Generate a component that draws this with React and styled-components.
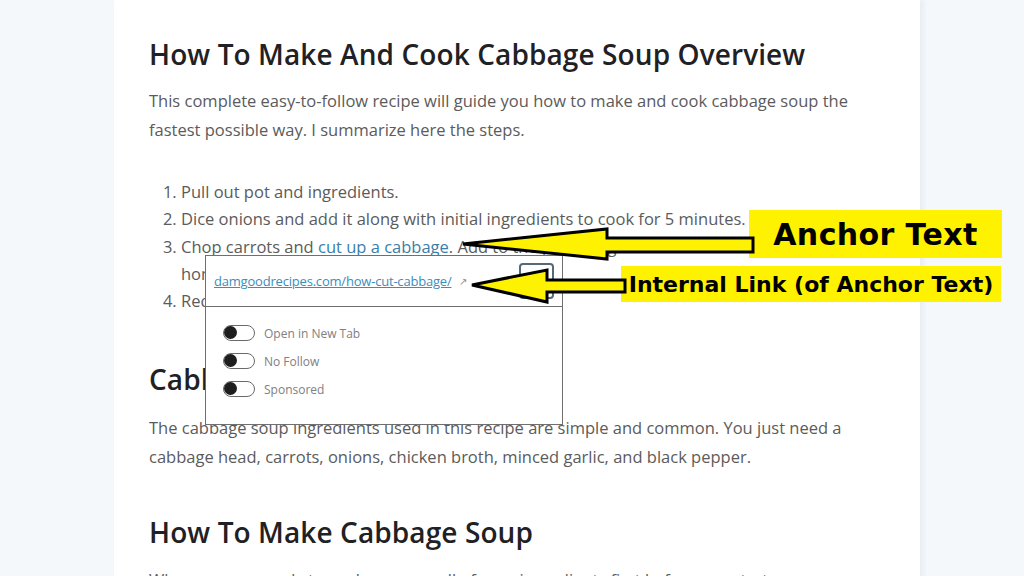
import styled, { createGlobalStyle } from 'styled-components';

const GlobalStyle = createGlobalStyle`
  html, body {
    margin: 0;
    padding: 0;
    background: #f4f8fb;
  }
  body {
    font-family: 'Open Sans', 'Liberation Sans', sans-serif;
  }
`;

const Page = styled.div`
  position: relative;
  width: 1024px;
  height: 576px;
  overflow: hidden;
  display: grid;
  grid-template-columns: 114px 806px 1fr;
  background: #f4f8fb;
`;

const Gutter = styled.div`
  background: #f4f8fb;
`;

const Column = styled.main`
  position: relative;
  background: #fff;
  padding: 37px 0 0 35px;
  box-shadow: 3px 0 5px rgba(200, 215, 225, 0.35);
`;

const Heading = styled.h2`
  margin: ${(p) => p.$top || 0}px 0 ${(p) => p.$bottom || 16}px;
  font-size: 28px;
  line-height: 34px;
  font-weight: 600;
  color: #1f2124;
  letter-spacing: 0.1px;
`;

const Text = styled.p`
  margin: ${(p) => p.$top || 0}px 0 0;
  width: 730px;
  font-size: 16.5px;
  line-height: 29px;
  color: #5b5b5b;
`;

const Steps = styled.ol`
  margin: 34px 0 0;
  padding-left: 32px;
  width: 690px;
  font-size: 16.5px;
  line-height: 27.3px;
  color: #5b5b5b;
`;

const Link = styled.a`
  color: #3a7ea8;
  text-decoration: underline;
  text-underline-offset: 2px;
`;

/* block editor link popover */
const Popover = styled.div`
  position: absolute;
  left: 91px;
  top: 255px;
  width: 358px;
  height: 170px;
  box-sizing: border-box;
  background: #fff;
  border: 1px solid #6f6f6f;
`;

const UrlRow = styled.div`
  display: flex;
  align-items: center;
  height: 50px;
  padding: 0 8px;
  border-bottom: 1px solid #6f6f6f;
`;

const Url = styled.a`
  font-size: 13px;
  color: #3b8dbb;
  text-decoration: underline;
  letter-spacing: -0.2px;
`;

const External = styled.span`
  margin-left: 8px;
  font-size: 10px;
  color: #8a8a8a;
`;

const EditButton = styled.div`
  margin-left: auto;
  width: 35px;
  height: 36px;
  box-sizing: border-box;
  border: 2px solid #54697a;
  border-radius: 4px;
`;

const Settings = styled.div`
  display: flex;
  flex-direction: column;
  padding: 12px 0 0 17px;
`;

const SettingRow = styled.label`
  display: flex;
  align-items: center;
  height: 28px;
`;

const Track = styled.span`
  position: relative;
  width: 32px;
  height: 16px;
  box-sizing: border-box;
  border: 1.5px solid #6a6a6a;
  border-radius: 8px;
  &::after {
    content: '';
    position: absolute;
    left: -0.5px;
    top: 0px;
    width: 13px;
    height: 13px;
    border-radius: 50%;
    background: #1e1e1e;
  }
`;

const SettingLabel = styled.span`
  margin-left: 9px;
  font-size: 12px;
  color: #808080;
`;

const Label = styled.div`
  position: absolute;
  left: ${(p) => p.$x}px;
  top: ${(p) => p.$y}px;
  width: ${(p) => p.$w}px;
  height: ${(p) => p.$h}px;
  display: flex;
  align-items: center;
  justify-content: center;
  background: #fff200;
  font-family: 'DejaVu Sans', sans-serif;
  font-weight: 700;
  font-size: ${(p) => p.$size}px;
  letter-spacing: ${(p) => p.$spacing || 0}px;
  color: #000;
  white-space: nowrap;
`;

const Arrows = styled.svg`
  position: absolute;
  left: 0;
  top: 0;
  pointer-events: none;
`;

const settings = ['Open in New Tab', 'No Follow', 'Sponsored'];

export default function App() {
  return (
    <>
      <GlobalStyle />
      <Page>
        <Gutter />
        <Column>
          <Heading $bottom={15}>How To Make And Cook Cabbage Soup Overview</Heading>
          <Text>
            This complete easy-to-follow recipe will guide you how to make and cook cabbage soup the
            fastest possible way. I summarize here the steps.
          </Text>
          <Steps>
            <li>Pull out pot and ingredients.</li>
            <li>Dice onions and add it along with initial ingredients to cook for 5 minutes.</li>
            <li>
              Chop carrots and <Link href="#">cut up a cabbage</Link>. Add to the pot, bring
              <br />
              home-made broth to a boil.
            </li>
            <li>Reduce heat and simmer.</li>
          </Steps>
          <Heading $top={48} $bottom={17}>
            Cabbage Soup Ingredients
          </Heading>
          <Text>
            The cabbage soup ingredients used in this recipe are simple and common. You just need a
            cabbage head, carrots, onions, chicken broth, minced garlic, and black pepper.
          </Text>
          <Heading $top={44}>How To Make Cabbage Soup</Heading>
          <Text $top={3}>
            When you are ready to cook, prepare all of your ingredients first before you start.
          </Text>

          <Popover>
            <UrlRow>
              <Url href="#">damgoodrecipes.com/how-cut-cabbage/</Url>
              <External>↗</External>
              <EditButton />
            </UrlRow>
            <Settings>
              {settings.map((s) => (
                <SettingRow key={s}>
                  <Track />
                  <SettingLabel>{s}</SettingLabel>
                </SettingRow>
              ))}
            </Settings>
          </Popover>
        </Column>
        <Gutter />

        <Label $x={749} $y={210} $w={253} $h={48} $size={30} $spacing={0.4}>
          Anchor Text
        </Label>
        <Label $x={621} $y={266} $w={380} $h={36} $size={22}>
          Internal Link (of Anchor Text)
        </Label>
        <Arrows width="1024" height="576" viewBox="0 0 1024 576">
          <path
            d="M463 244 L607 229 L607 238 L753 238 L753 252 L607 252 L607 259 Z"
            fill="#fff200"
            stroke="#000"
            strokeWidth="3"
            strokeLinejoin="miter"
          />
          <path
            d="M472 285 L547 270 L547 280 L625 280 L625 292 L547 292 L547 302 Z"
            fill="#fff200"
            stroke="#000"
            strokeWidth="3"
            strokeLinejoin="miter"
          />
        </Arrows>
      </Page>
    </>
  );
}
